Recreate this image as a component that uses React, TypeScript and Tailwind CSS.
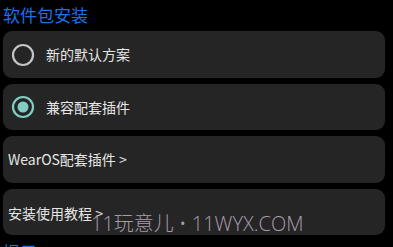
import React from "react";

const font = { fontFamily: '"Noto Sans CJK SC", "Noto Sans", sans-serif' };

function Radio({ checked }: { checked: boolean }) {
  return (
    <svg width="24" height="24" viewBox="0 0 24 24" className="shrink-0">
      <circle cx="12" cy="12" r="10" fill="none" stroke={checked ? "#7fcdc4" : "#c4c4c4"} strokeWidth="2.2" />
      {checked && <circle cx="12" cy="12" r="5.5" fill="#7fcdc4" />}
    </svg>
  );
}

export default function App() {
  return (
    <div className="relative w-[393px] h-[247px] overflow-hidden bg-black" style={font}>
      <div className="flex flex-col pl-[3px] pr-[8px]">
        <div className="h-[31px] flex items-center text-[17px] text-[#1f6fe8] leading-none pb-[3px]">软件包安装</div>
        <div className="flex flex-col gap-[6px]">
          <div className="h-[47px] rounded-[9px] bg-[#252525] flex items-center pl-[8px] gap-[11px]">
            <Radio checked={false} />
            <span className="text-[14px] text-[#e6e6e6]">新的默认方案</span>
          </div>
          <div className="h-[46px] rounded-[9px] bg-[#252525] flex items-center pl-[8px] gap-[11px]">
            <Radio checked={true} />
            <span className="text-[14px] text-[#e6e6e6]">兼容配套插件</span>
          </div>
          <div className="h-[47px] rounded-[9px] bg-[#252525] flex items-center pl-[5px]">
            <span className="text-[14px] text-[#e6e6e6]">WearOS配套插件 &gt;</span>
          </div>
          <div className="h-[46px] rounded-[9px] bg-[#252525] flex items-center pl-[5px] pt-[2px]">
            <span className="text-[14px] text-[#e6e6e6]">安装使用教程 &gt;</span>
          </div>
        </div>
        <div className="mt-[8px] text-[17px] text-[#1f6fe8] leading-none">提示</div>
      </div>
      <div
        className="absolute left-[91px] top-[214px] text-[20px] font-light leading-none text-[#a69cab]"
        style={{ fontFamily: '"Open Sans", "Noto Sans CJK SC", sans-serif' }}
      >
        11玩意儿 • 11WYX.COM
      </div>
    </div>
  );
}
